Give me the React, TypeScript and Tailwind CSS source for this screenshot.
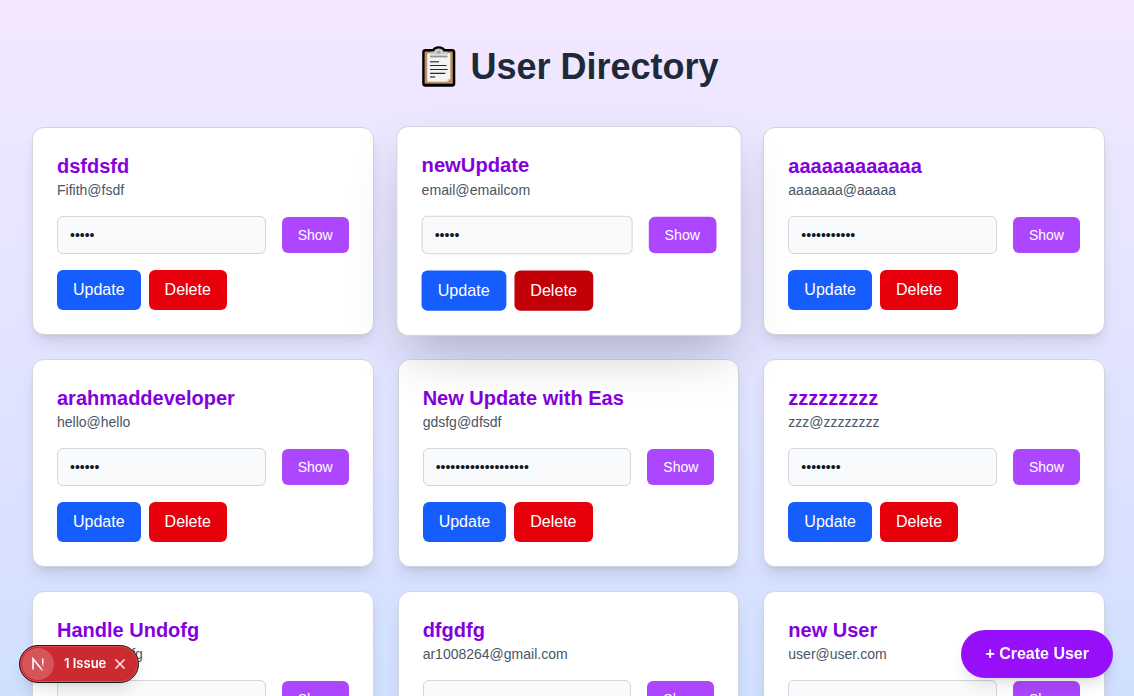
import { useState } from "react";

type User = { name: string; email: string; password: string };

const users: User[] = [
  { name: "dsfdsfd", email: "Fifith@fsdf", password: "12345" },
  { name: "newUpdate", email: "email@emailcom", password: "12345" },
  { name: "aaaaaaaaaaaa", email: "aaaaaaa@aaaaa", password: "aaaaaaaaaaa" },
  { name: "arahmaddeveloper", email: "hello@hello", password: "123456" },
  { name: "New Update with Eas", email: "gdsfg@dfsdf", password: "1234567890123456789" },
  { name: "zzzzzzzzz", email: "zzz@zzzzzzzz", password: "zzzzzzzz" },
  { name: "Handle Undofg", email: "handle@fssfg", password: "12345678" },
  { name: "dfgdfg", email: "ar1008264@gmail.com", password: "12345678" },
  { name: "new User", email: "user@user.com", password: "12345678" },
];

function Clipboard() {
  return (
    <svg viewBox="0 0 34 42" className="-my-1 h-[42px] w-[34px]" aria-hidden="true">
      <path d="M3.5 3H10.5C12 1.3 14 0.3 16.7 0.3S21.4 1.3 23 3H30Q33.3 3 33.3 6.3V37.4Q33.3 40.7 30 40.7H3.5Q.2 40.7 .2 37.4V6.3Q.2 3 3.5 3Z" fill="#000" />
      <rect x="2.6" y="5.5" width="28.2" height="32.3" rx="1" fill="#bd8d62" />
      <path d="M5.2 7.2H28.3V33L25.5 35.8H5.2Z" fill="#f3f3f5" />
      <path d="M28.3 33H25.5V35.8Z" fill="#c4c4c8" />
      <path d="M8 8.4V7.2Q8 5.8 10 5.8H12Q13 2.5 16.7 2.5T21.5 5.8H24Q26 5.8 26 7.2V8.4Z" fill="#c9c9cd" />
      <circle cx="16.7" cy="6.4" r="1.4" fill="#c78e6c" />
      <path d="M8 10.5H25.5" stroke="#929296" strokeWidth="1.8" />
      <path d="M8 15.8H17M8 31H13.2" stroke="#58585b" strokeWidth="1.5" />
      <path d="M8 19.5H24.5M8 23.5H25.7M8 27.3H23.3" stroke="#29292c" strokeWidth="1.2" />
    </svg>
  );
}

function UserCard({ user, active }: { user: User; active: boolean }) {
  const [shown, setShown] = useState(false);
  return (
    <article
      className={
        "rounded-xl border border-gray-300 bg-white p-6 " +
        (active ? "scale-101 shadow-2xl" : "shadow-lg")
      }
    >
      <h2 className="text-xl font-bold text-purple-700">{user.name}</h2>
      <p className="text-sm text-gray-600">{user.email}</p>
      <div className="mt-4 flex items-center gap-4">
        <input
          aria-label={`Password of ${user.name}`}
          type={shown ? "text" : "password"}
          readOnly
          value={user.password}
          className="min-w-0 flex-1 rounded-md border border-gray-300 bg-gray-50 px-3 py-2 text-sm text-gray-900"
        />
        <button
          type="button"
          onClick={() => setShown(!shown)}
          className="rounded-md bg-purple-500 px-4 py-2 text-sm text-white"
        >
          {shown ? "Hide" : "Show"}
        </button>
      </div>
      <div className="mt-4 flex gap-2">
        <button type="button" className="rounded-md bg-blue-600 px-4 py-2 text-white">
          Update
        </button>
        <button
          type="button"
          className={"rounded-md px-4 py-2 text-white " + (active ? "bg-red-700" : "bg-red-600")}
        >
          Delete
        </button>
      </div>
    </article>
  );
}

export default function App() {
  return (
    <div className="min-h-screen bg-linear-to-b from-purple-100 to-blue-200 to-130% pt-[47px] pr-[29px] pb-8 pl-8 font-['Liberation_Sans',Arial,sans-serif] text-gray-900">
      <h1 className="mb-10 flex items-center justify-center gap-[14px] pl-1 text-4xl font-bold text-gray-800">
        <Clipboard />
        User Directory
      </h1>
      <main className="grid grid-cols-3 gap-6">
        {users.map((u, i) => (
          <UserCard key={u.name} user={u} active={i === 1} />
        ))}
      </main>

      <button
        type="button"
        className="fixed right-[21px] bottom-[18px] z-10 rounded-full bg-[#9810fa] px-6 py-3 font-bold text-white shadow-lg"
      >
        + Create User
      </button>

      <div className="fixed bottom-[13px] left-[19px] z-10 flex h-[38px] w-[120px] items-center rounded-full border border-[#1c1c1c] bg-[#ca2a30] pl-[2px] font-[Inter,sans-serif] text-white shadow-lg inset-ring inset-ring-[#e5484d]">
        <span className="flex size-8 items-center justify-center rounded-full bg-[#d5555a]">
          <svg viewBox="0 0 14 14" className="size-[14px]" fill="none" aria-hidden="true">
            <defs>
              <linearGradient id="stem" x1="0" y1="0" x2="0" y2="1">
                <stop offset="0.4" stopColor="#fff" />
                <stop offset="1" stopColor="#fff" stopOpacity="0" />
              </linearGradient>
              <linearGradient id="diag" x1="0" y1="0" x2="1" y2="1">
                <stop offset="0.7" stopColor="#fff" />
                <stop offset="1" stopColor="#fff" stopOpacity="0.3" />
              </linearGradient>
            </defs>
            <path d="M2 12.5V1.8L12 14" stroke="url(#diag)" strokeWidth="1.6" />
            <rect x="11" y="1.5" width="1.5" height="9" fill="url(#stem)" />
          </svg>
        </span>
        <button type="button" className="ml-[10px] text-[13px] font-semibold">
          1 Issue
        </button>
        <button type="button" aria-label="Close" className="ml-2">
          <svg viewBox="0 0 12 12" className="size-3" aria-hidden="true">
            <path d="M1.5 1.5L10.5 10.5M10.5 1.5L1.5 10.5" stroke="#fff" strokeWidth="1.3" />
          </svg>
        </button>
      </div>
    </div>
  );
}
